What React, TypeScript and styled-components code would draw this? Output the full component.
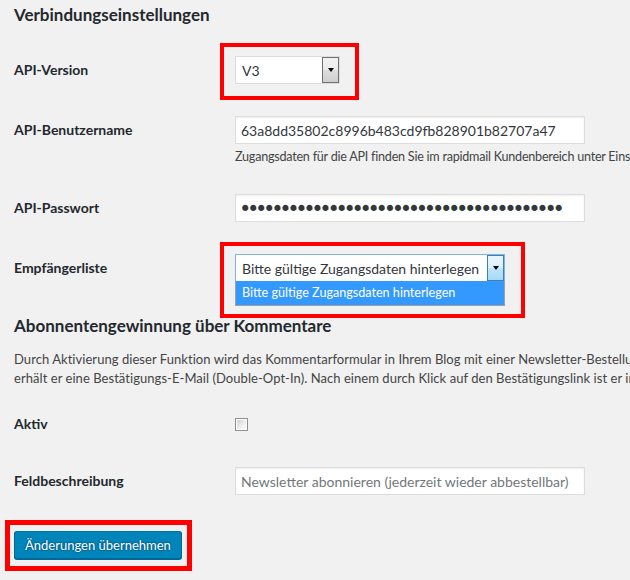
import React from "react";
import styled, { createGlobalStyle } from "styled-components";

const GlobalStyle = createGlobalStyle`
  html, body {
    margin: 0;
    padding: 0;
    background: #f1f1f1;
  }
  body {
    font-family: Lato, "Liberation Sans", sans-serif;
    color: #444;
    overflow: hidden;
  }
`;

const Page = styled.div`
  width: 630px;
  height: 580px;
  overflow: hidden;
  box-sizing: border-box;
  padding-left: 14px;
`;

const SectionTitle = styled.h2<{ $mt: number; $mb: number }>`
  margin: ${(p) => p.$mt}px 0 ${(p) => p.$mb}px;
  font-size: 17px;
  font-weight: 700;
  line-height: 24px;
  color: #23282d;
  white-space: nowrap;
`;

const FormTable = styled.div`
  display: flex;
  flex-direction: column;
`;

const Row = styled.div<{ $pt: number; $pb: number }>`
  display: grid;
  grid-template-columns: 221px 1fr;
  align-items: start;
  padding: ${(p) => p.$pt}px 0 ${(p) => p.$pb}px;
`;

const Label = styled.div`
  font-size: 14px;
  font-weight: 700;
  line-height: 28px;
  color: #23282d;
  white-space: nowrap;
`;

const Field = styled.div`
  display: flex;
  flex-direction: column;
  align-items: flex-start;
  min-width: 0;
`;

const ControlLine = styled.div`
  height: 28px;
  display: flex;
  align-items: center;
`;

const TextInput = styled.input<{ $masked?: boolean }>`
  box-sizing: border-box;
  width: 350px;
  height: 28px;
  margin: 0;
  padding: ${(p) => (p.$masked ? "2px 5px 0 3px" : "0 5px")};
  border: 1px solid #ddd;
  background: #fff;
  box-shadow: inset 0 1px 2px rgba(0, 0, 0, 0.07);
  font-family: ${(p) => (p.$masked ? '"DejaVu Sans", sans-serif' : 'Lato, "Liberation Sans", sans-serif')};
  font-size: ${(p) => (p.$masked ? "21px" : "14px")};
  letter-spacing: ${(p) => (p.$masked ? "-4.35px" : "0")};
  color: #32373c;
  outline: none;
  &::placeholder {
    color: #72777c;
  }
`;

const Description = styled.p`
  margin: 4px 0 0;
  font-size: 12.6px;
  line-height: 18px;
  letter-spacing: -0.24px;
  white-space: nowrap;
  color: #444;
`;

const Highlight = styled.div<{ $inset: string; $w: number }>`
  position: relative;
  display: inline-block;
  &::after {
    content: "";
    position: absolute;
    inset: ${(p) => p.$inset};
    border: ${(p) => p.$w}px solid #ff0000;
    pointer-events: none;
  }
`;

const FakeSelect = styled.div<{ $width: number; $focused?: boolean }>`
  position: relative;
  box-sizing: border-box;
  width: ${(p) => p.$width}px;
  height: 28px;
  border: 1px solid ${(p) => (p.$focused ? "#7eb4ea" : "#ddd")};
  background: #fff;
  display: flex;
  align-items: center;
  padding-left: 6px;
  font-size: 14px;
  color: #32373c;
  white-space: nowrap;
`;

const SelectButton = styled.span<{ $focused?: boolean }>`
  position: absolute;
  top: 0;
  right: 0;
  bottom: 0;
  width: 17px;
  box-sizing: border-box;
  border: 1px solid ${(p) => (p.$focused ? "#3c7fb1" : "#707070")};
  background: ${(p) =>
    p.$focused
      ? "linear-gradient(#eaf6fd 0%, #d9f0fc 50%, #bee6fd 51%, #a7d9f5 100%)"
      : "linear-gradient(#f2f2f2 0%, #ebebeb 50%, #dddddd 51%, #cfcfcf 100%)"};
  display: flex;
  align-items: center;
  justify-content: center;
  &::before {
    content: "";
    width: 0;
    height: 0;
    border-left: 3.5px solid transparent;
    border-right: 3.5px solid transparent;
    border-top: 4px solid #000;
  }
`;

const DropList = styled.div`
  position: absolute;
  top: 100%;
  left: -1px;
  right: -1px;
  box-sizing: border-box;
  height: 25px;
  border: 1px solid #a0a0a0;
  border-top: none;
  background: #3399ff;
  color: #fff;
  font-size: 12.6px;
  line-height: 24px;
  padding-left: 6px;
  white-space: nowrap;
`;

const Checkbox = styled.span`
  display: inline-block;
  box-sizing: border-box;
  width: 13px;
  height: 13px;
  border: 1px solid #8f8f8f;
  background: #fff;
  padding: 1px;
  &::before {
    content: "";
    display: block;
    width: 100%;
    height: 100%;
    background: linear-gradient(135deg, #d2d2d2 0%, #f0f0f0 60%, #fcfcfc 100%);
  }
`;

const Intro = styled.p`
  margin: 12px 0 0;
  font-size: 13px;
  line-height: 19px;
  letter-spacing: 0.05px;
  color: #444;
  white-space: nowrap;
`;

const IntroLine = styled.span`
  display: block;
`;

const Submit = styled.div`
  padding-top: 19px;
`;

const PrimaryButton = styled.button`
  box-sizing: border-box;
  height: 28px;
  margin: 0;
  padding: 0 10px;
  border: 1px solid;
  border-color: #0073aa #006799 #006799;
  border-radius: 3px;
  background: #0085ba;
  box-shadow: 0 1px 0 #006799;
  color: #fff;
  font-family: Lato, "Liberation Sans", sans-serif;
  font-size: 13px;
  line-height: 26px;
  text-shadow: 0 -1px 1px #006799, 1px 0 1px #006799, 0 1px 1px #006799, -1px 0 1px #006799;
  cursor: pointer;
`;

export default function App() {
  return (
    <>
      <GlobalStyle />
      <Page>
        <SectionTitle $mt={3} $mb={14}>Verbindungseinstellungen</SectionTitle>
        <FormTable>
          <Row $pt={15} $pb={17}>
            <Label>API-Version</Label>
            <Field>
              <Highlight $inset="-13px -19px -16px -15px" $w={4}>
                <FakeSelect $width={105}>
                  V3
                  <SelectButton />
                </FakeSelect>
              </Highlight>
            </Field>
          </Row>
          <Row $pt={15} $pb={13}>
            <Label>API-Benutzername</Label>
            <Field>
              <TextInput readOnly value="63a8dd35802c8996b483cd9fb828901b82707a47" />
              <Description>
                Zugangsdaten für die API finden Sie im rapidmail Kundenbereich unter Einstellungen → API-Zugänge.
              </Description>
            </Field>
          </Row>
          <Row $pt={15} $pb={17}>
            <Label>API-Passwort</Label>
            <Field>
              <TextInput $masked type="password" readOnly value="0123456789abcdef0123456789abcdef01234567" />
            </Field>
          </Row>
          <Row $pt={15} $pb={17}>
            <Label>Empfängerliste</Label>
            <Field>
              <Highlight $inset="-12px -20px -36px -15px" $w={4}>
                <FakeSelect $width={270} $focused>
                  Bitte gültige Zugangsdaten hinterlegen
                  <SelectButton $focused />
                  <DropList>Bitte gültige Zugangsdaten hinterlegen</DropList>
                </FakeSelect>
              </Highlight>
            </Field>
          </Row>
        </FormTable>

        <SectionTitle $mt={15} $mb={0}>Abonnentengewinnung über Kommentare</SectionTitle>
        <Intro>
          <IntroLine>
            Durch Aktivierung dieser Funktion wird das Kommentarformular in Ihrem Blog mit einer Newsletter-Bestellung erweitert. Meldet sich ein Kommentator an,
          </IntroLine>
          <IntroLine>
            erhält er eine Bestätigungs-E-Mail (Double-Opt-In). Nach einem durch Klick auf den Bestätigungslink ist er in Ihre Empfängerliste eingetragen.
          </IntroLine>
        </Intro>

        <FormTable>
          <Row $pt={22} $pb={14}>
            <Label>Aktiv</Label>
            <ControlLine>
              <Checkbox role="checkbox" aria-checked="false" />
            </ControlLine>
          </Row>
          <Row $pt={15} $pb={17}>
            <Label>Feldbeschreibung</Label>
            <Field>
              <TextInput placeholder="Newsletter abonnieren (jederzeit wieder abbestellbar)" />
            </Field>
          </Row>
        </FormTable>

        <Submit>
          <Highlight $inset="-11px -10px -12px -9px" $w={5}>
            <PrimaryButton type="button">Änderungen übernehmen</PrimaryButton>
          </Highlight>
        </Submit>
      </Page>
    </>
  );
}
